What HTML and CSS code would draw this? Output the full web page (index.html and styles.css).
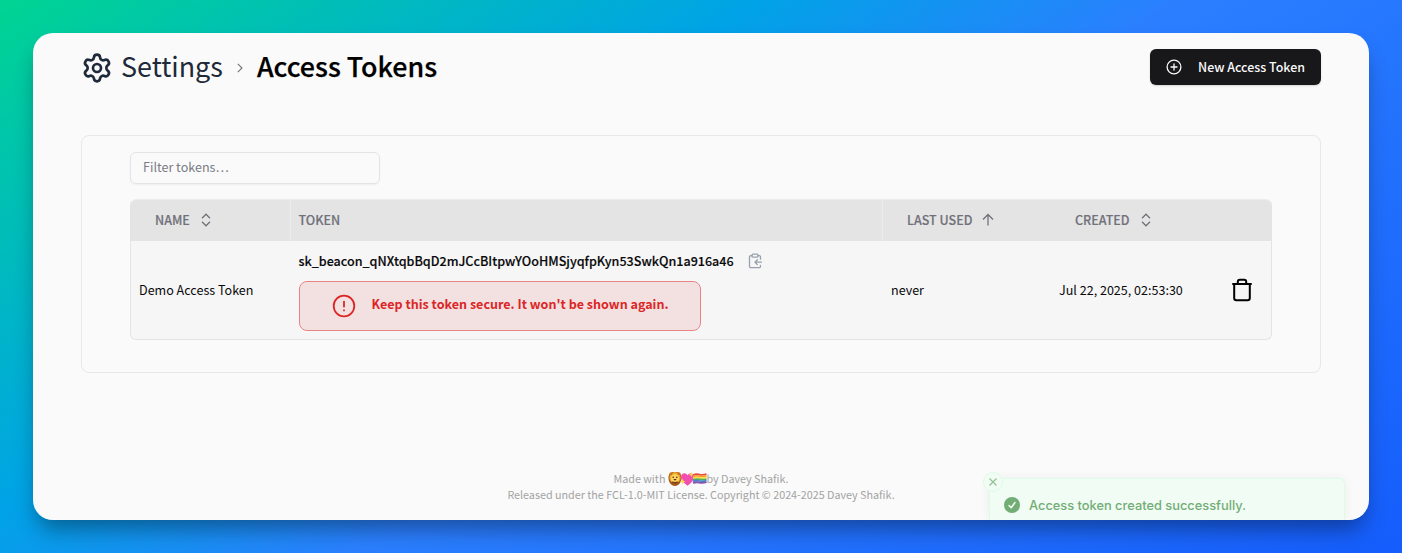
FILE: index.html
```html
<!DOCTYPE html>
<html lang="en">
<head>
<meta charset="utf-8">
<title>Access Tokens</title>
<link rel="stylesheet" href="styles.css">
</head>
<body>
<div class="window">
  <header class="header">
    <nav class="crumbs">
      <svg class="gear" viewBox="0 0 24 24" fill="none" stroke="currentColor" stroke-width="2" stroke-linecap="round" stroke-linejoin="round"><path d="M9.671 4.136a2.34 2.34 0 0 1 4.659 0 2.34 2.34 0 0 0 3.319 1.915 2.34 2.34 0 0 1 2.33 4.033 2.34 2.34 0 0 0 0 3.831 2.34 2.34 0 0 1-2.33 4.033 2.34 2.34 0 0 0-3.319 1.915 2.34 2.34 0 0 1-4.659 0 2.34 2.34 0 0 0-3.32-1.915 2.34 2.34 0 0 1-2.33-4.033 2.34 2.34 0 0 0 0-3.831A2.34 2.34 0 0 1 6.35 6.051a2.34 2.34 0 0 0 3.319-1.915"/><circle cx="12" cy="12" r="3"/></svg>
      <span class="crumb">Settings</span>
      <svg class="chevron" viewBox="0 0 8 12" fill="none" stroke="currentColor" stroke-width="1.1"><path d="M1.800 1.800 6 6 1.800 10.200"/></svg>
      <h1 class="title">Access Tokens</h1>
    </nav>
    <button class="new-token">
      <svg viewBox="0 0 16 16" fill="none" stroke="currentColor" stroke-width="1.300" stroke-linecap="round"><circle cx="8" cy="8" r="6.900"/><path d="M8 5v6M5 8h6"/></svg>
      <span>New Access Token</span>
    </button>
  </header>

  <main class="panel">
    <div class="filter">Filter tokens…</div>
    <div class="table">
      <div class="row head">
        <div class="cell sortable"><span>NAME</span><svg class="sort" viewBox="0 0 16 16" fill="none" stroke="currentColor" stroke-width="1.300"><path d="M4 6.200 8 2.200l4 4M4 9.800l4 4 4-4"/></svg></div>
        <div class="cell divided"><span>TOKEN</span></div>
        <div class="cell sortable divided"><span>LAST USED</span><svg class="sort" viewBox="0 0 16 16" fill="none" stroke="currentColor" stroke-width="1.300"><path d="M8 13.500V2.800M3 7.500l5-5 5 5"/></svg></div>
        <div class="cell sortable"><span>CREATED</span><svg class="sort" viewBox="0 0 16 16" fill="none" stroke="currentColor" stroke-width="1.300"><path d="M4 6.200 8 2.200l4 4M4 9.800l4 4 4-4"/></svg></div>
        <div class="cell"></div>
      </div>
      <div class="row body">
        <div class="cell">Demo Access Token</div>
        <div class="cell token-cell">
          <div class="token"><span class="secret">sk_beacon_qNXtqbBqD2mJCcBItpwYOoHMSjyqfpKyn53SwkQn1a916a46</span><svg class="copy" viewBox="0 0 16 16" fill="none" stroke="currentColor" stroke-width="1.300" stroke-linecap="round" stroke-linejoin="round"><rect x="5" y="1.200" width="6" height="3" rx="1"/><path d="M11 2.600h1.200A1.300 1.300 0 0 1 13.500 4v2.200M5 2.600H3.800A1.300 1.300 0 0 0 2.500 4v9.300a1.300 1.300 0 0 0 1.300 1.300h8.400a1.300 1.300 0 0 0 1.300-1.300v-.8M14.400 9.200H8.200M10.400 6.800 8 9.200l2.400 2.400"/></svg></div>
          <div class="warning">
            <svg viewBox="0 0 24 24" fill="none" stroke="currentColor" stroke-width="1.800" stroke-linecap="round"><circle cx="12" cy="12" r="10.300"/><path d="M12 7.600v5M12 16.200v.2"/></svg>
            <strong>Keep this token secure. It won't be shown again.</strong>
          </div>
        </div>
        <div class="cell last-used">never</div>
        <div class="cell">Jul 22, 2025, 02:53:30</div>
        <div class="cell trash"><svg viewBox="0 0 22 24" fill="none" stroke="currentColor" stroke-width="2" stroke-linecap="round" stroke-linejoin="round"><path d="M2 6h18M3.200 6v14a2.200 2.200 0 0 0 2.200 2.200h11.200a2.200 2.200 0 0 0 2.200-2.200V6M6.800 6V3.800A2 2 0 0 1 8.800 1.800h4.400a2 2 0 0 1 2 2V6"/></svg></div>
      </div>
    </div>
  </main>

  <footer class="footer">
    <p class="made"><span>Made with</span><svg class="emoji" viewBox="0 0 39 16">
      <path fill="#a9561a" d="M7 1.200C11 .6 13.700 3 13.500 7c0 4-2.600 8-6.500 8S.5 11 .5 7C.3 3 3 .6 7 1.200Z"/><circle cx="7" cy="6.500" r="5.600" fill="#eda928"/><circle cx="3" cy="2.700" r="1.500" fill="#c9741d"/><circle cx="11" cy="2.700" r="1.500" fill="#c9741d"/><circle cx="7" cy="7.400" r="4.100" fill="#ffd35c"/><circle cx="5.200" cy="6.300" r=".8" fill="#4d2914"/><circle cx="8.800" cy="6.300" r=".8" fill="#4d2914"/><path d="M5.400 7.900h3.200L7 9.700Z" fill="#4d2914"/><path d="M4.200 10.800q2.800 2 5.600 0" fill="none" stroke="#73401b" stroke-width="1.600"/>
      <path fill="#f24db0" d="M19.500 14.800c-4-3-6.500-5.600-6.500-8.800 0-4.400 5-5 6.500-1.800C21 1 26 1.600 26 6c0 3.200-2.500 5.800-6.500 8.800Z"/><path fill="#ffd84e" d="m23.300.8.7 2 2 .7-2 .7-.7 2-.7-2-2-.7 2-.7ZM14.600 7.800l.8 2 2 .8-2 .8-.8 2-.8-2-2-.8 2-.8Z"/>
      <g fill="none" stroke-width="1.800"><path stroke="#e94b43" d="M25 4q3.500-1.300 6.500-.4t7-.4"/><path stroke="#f79d32" d="M25 5.600q3.500-1.300 6.500-.4t7-.4"/><path stroke="#f8df3f" d="M25 7.200q3.500-1.300 6.500-.4t7-.4"/><path stroke="#50ae61" d="M25 8.800q3.500-1.300 6.500-.4t7-.4"/><path stroke="#3d83d1" d="M25 10.400q3.500-1.300 6.500-.4t7-.4"/><path stroke="#8854ad" d="M25 12q3.500-1.300 6.500-.4t7-.4"/></g>
    </svg><span>by Davey Shafik.</span></p>
    <p>Released under the FCL-1.0-MIT License. Copyright © 2024-2025 Davey Shafik.</p>
  </footer>

  <div class="toast">
    <div class="close"><svg viewBox="0 0 8 8" fill="none" stroke="currentColor" stroke-width="1.200"><path d="m.5.5 7 7M7.500.5l-7 7"/></svg></div>
    <svg class="check" viewBox="0 0 16 16"><circle cx="8" cy="8" r="8" fill="currentColor"/><path d="m5 8.500 2.200 2.200L11 5.500" fill="none" stroke="#f1fcf4" stroke-width="1.500" stroke-linecap="round" stroke-linejoin="round"/></svg>
    <span>Access token created successfully.</span>
  </div>
</div>
</body>
</html>
```
FILE: styles.css
```css
* { box-sizing: border-box; }
body {
  margin: 0;
  width: 1402px;
  height: 553px;
  padding: 33px;
  overflow: hidden;
  background: linear-gradient(146deg, #00d492 0%, #00a3e6 34%, #2b7fff 53%, #155dfc 100%);
  font-family: "Noto Sans CJK SC", "Noto Sans", sans-serif;
  font-size: 12.55px;
  line-height: 20px;
  color: #09090b;
}
svg { display: block; flex: none; }
p, h1 { margin: 0; }
.window {
  position: relative;
  display: flex;
  flex-direction: column;
  height: 487px;
  padding: 16px 48px 0;
  border-radius: 20px;
  background: #fafafa;
}
.window::before {
  content: "";
  position: absolute;
  inset: 0;
  z-index: -1;
  border-radius: 20px;
  box-shadow: 0 14px 22px -5px rgba(0, 0, 0, .38);
}
.header { display: flex; justify-content: space-between; height: 36px; }
.crumbs { display: flex; align-items: center; height: 36px; padding-top: 1px; }
.gear { width: 32px; height: 32px; color: #1e2939; }
.crumb { margin: -3px 0 0 8px; font-size: 26.9px; color: #1e2939; }
.chevron { width: 8px; height: 12px; margin: 0 13px; color: #71717b; }
.title { margin-top: -3px; font-size: 26.8px; font-weight: 500; color: #000; -webkit-text-stroke: .25px; }
.new-token {
  display: flex;
  align-items: center;
  gap: 16px;
  width: 171px;
  height: 36px;
  padding: 0 16px;
  border: 0;
  border-radius: 6px;
  background: #18181b;
  box-shadow: 0 1px 2px rgba(0, 0, 0, .15);
  color: #fafafa;
  font: 500 12.45px/20px "Noto Sans CJK SC", sans-serif;
  white-space: nowrap;
}
.new-token svg { width: 16px; height: 16px; }
.panel {
  height: 238px;
  margin-top: 50px;
  padding: 16px 48px;
  border: 1px solid #e8e8ea;
  border-radius: 8px;
}
.filter {
  width: 250px;
  height: 32px;
  padding: 4px 12px;
  border: 1px solid #e4e4e7;
  border-radius: 6px;
  box-shadow: 0 1px 2px rgba(0, 0, 0, .05);
  color: #7c7c84;
}
.table {
  display: flex;
  flex-direction: column;
  width: 1142px;
  height: 141px;
  margin-top: 15px;
  border: 1px solid #e4e4e7;
  border-top-color: #ececee;
  border-radius: 6px;
  overflow: hidden;
  background: #f6f6f6;
}
.row { display: grid; grid-template-columns: 159px 592px 169px 170px 50px; }
.head { height: 41px; background: #e4e4e4; color: #71717b; font-size: 12.5px; font-weight: 500; -webkit-text-stroke: .15px; }
.head .cell { padding-bottom: 1px; }
.body { flex: 1; }
.cell { display: flex; align-items: center; padding: 0 8px; white-space: nowrap; }
.divided { border-left: 1px solid #ececec; }
.head .divided:not(.sortable) { padding-left: 7.5px; }
.head .sortable { gap: 8px; padding-left: 24px; }
.sort { width: 16px; height: 16px; }
.token-cell { flex-direction: column; align-items: flex-start; padding: 10px 8px 0 8.5px; }
.last-used { padding-left: 9px; }
.token { display: flex; align-items: center; gap: 13px; height: 20px; }
.secret { font-weight: 500; -webkit-text-stroke: .15px; }
.copy { width: 16px; height: 16px; color: #99a1af; }
.warning {
  display: flex;
  align-items: center;
  gap: 16px;
  width: 402.5px;
  height: 50px;
  margin-top: 10px;
  padding-left: 32px;
  border: 1px solid #e98484;
  border-radius: 8px;
  background: #f3e1e1;
  color: #dc2626;
}
.warning svg { width: 24px; height: 24px; }
.warning strong { margin-bottom: 4px; font-weight: 700; }
.trash { justify-content: center; padding: 0 9px 0 0; color: #000; }
.trash svg { width: 22px; height: 24px; }
.footer {
  display: flex;
  flex-direction: column;
  align-items: center;
  margin-top: 98px;
  font-size: 10.76px;
  line-height: 16px;
  color: #a3a3a3;
  white-space: nowrap;
}
.made { display: flex; align-items: center; height: 16px; }
.emoji { width: 39px; height: 16px; margin: 0 -1px 0 3px; }
.toast {
  position: absolute;
  left: 956px;
  bottom: 0;
  display: flex;
  gap: 9px;
  width: 356px;
  height: 42px;
  padding: 18px 14px 0;
  border: 1px solid #dcfce7;
  border-bottom: 0;
  border-radius: 6px 6px 0 0;
  background: #f1fcf4;
  box-shadow: 0 1px 12px rgba(0, 0, 0, .06);
  clip-path: inset(-20px -20px 0 -20px);
  color: #72ad76;
  font: 500 12.83px/17px Inter, sans-serif;
}
.check { width: 16px; height: 16px; }
.close {
  position: absolute;
  left: -7px;
  top: -7px;
  display: grid;
  place-items: center;
  width: 20px;
  height: 20px;
  border: 1px solid #dcfce7;
  border-radius: 50%;
  background: #f1fcf4;
  color: #8fc293;
}
.close svg { width: 8px; height: 8px; }
```
